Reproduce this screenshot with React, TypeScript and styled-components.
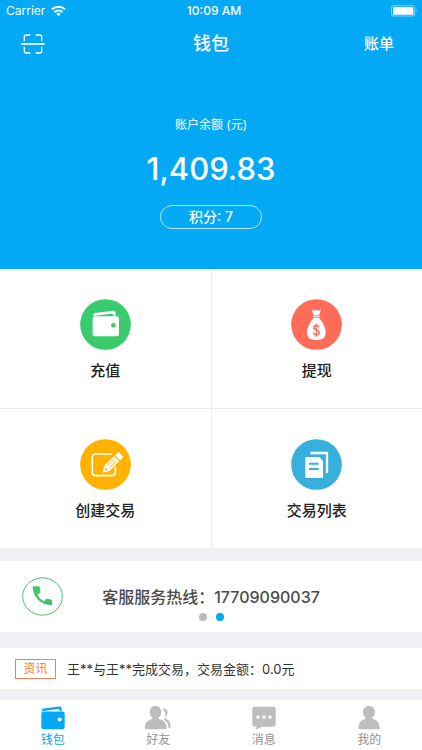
import React from "react";
import styled, { createGlobalStyle } from "styled-components";

const BLUE = "#03a9f4";

const GlobalStyle = createGlobalStyle`
  *, *::before, *::after { box-sizing: border-box; }
  body {
    margin: 0;
    background: #efeff4;
    font-family: Inter, "Noto Sans CJK SC", sans-serif;
    color: #333;
  }
  button { font: inherit; color: inherit; background: none; border: 0; padding: 0; cursor: pointer; }
  a { color: inherit; text-decoration: none; }
  h1, p { margin: 0; font-weight: inherit; }
  svg { display: block; flex: none; }
`;

const Page = styled.div`
  display: flex;
  flex-direction: column;
  min-height: 100vh;
`;

const Hero = styled.header`
  background: ${BLUE};
  color: #fff;
  padding-bottom: 40px;
`;

const StatusBar = styled.div`
  display: grid;
  grid-template-columns: 1fr auto 1fr;
  align-items: center;
  height: 22px;
  padding: 0 4px 0 6px;
  font-size: 12px;
  line-height: 22px;
`;

const Carrier = styled.span`
  display: flex;
  align-items: center;
  gap: 6px;
`;

const Clock = styled.span`
  font-weight: 500;
  padding-left: 4px;
`;

const Battery = styled.span`
  justify-self: end;
`;

const NavBar = styled.nav`
  display: grid;
  grid-template-columns: 1fr auto 1fr;
  align-items: center;
  height: 43px;
  padding: 0 28px 0 21px;
`;

const NavTitle = styled.h1`
  font-size: 18px;
  line-height: 24px;
  font-weight: 500;
  padding-left: 7px;
`;

const BillLink = styled.a`
  justify-self: end;
  font-size: 15px;
  line-height: 24px;
  font-weight: 500;
`;

const Balance = styled.section`
  display: flex;
  flex-direction: column;
  align-items: center;
  padding-top: 50px;
`;

const BalanceLabel = styled.p`
  font-size: 12px;
  line-height: 20px;
`;

const Amount = styled.p`
  margin-top: 12px;
  font-size: 31px;
  line-height: 44px;
  font-weight: 500;
`;

const Points = styled.button`
  margin-top: 14px;
  width: 102px;
  height: 24px;
  && { border: 1px solid rgba(255, 255, 255, 0.7); }
  border-radius: 12px;
  font-size: 14px;
  line-height: 20px;
  font-weight: 500;
`;

const Actions = styled.section`
  display: grid;
  grid-template-columns: 1fr 1fr;
  gap: 1px;
  background: #ebebee;
`;

const ActionTile = styled.button`
  && { background: #fff; padding: 30px 0 25px; }
  display: flex;
  flex-direction: column;
  align-items: center;
  gap: 9px;
  color: #222;
  font-size: 15px;
  line-height: 24px;
  font-weight: 500;
`;

const Hotline = styled.section`
  display: grid;
  grid-template-columns: 84px 1fr 84px;
  align-items: center;
  height: 71px;
  margin-top: 13px;
  background: #fff;
  position: relative;
`;

const CallButton = styled.button`
  justify-self: center;
`;

const HotlineText = styled.p`
  text-align: center;
  white-space: nowrap;
  font-size: 16px;
  line-height: 24px;
  font-weight: 500;
  color: #4a4a4a;
`;

const Dots = styled.div`
  position: absolute;
  left: 0;
  right: 0;
  bottom: 11px;
  display: flex;
  justify-content: center;
  gap: 9px;
`;

const Dot = styled.button<{ $active?: boolean }>`
  width: 8px;
  height: 8px;
  border-radius: 50%;
  && { background: ${(p) => (p.$active ? BLUE : "#bbb")}; }
`;

const News = styled.section`
  display: flex;
  align-items: center;
  gap: 11px;
  height: 41px;
  margin-top: 16px;
  padding: 0 15px;
  background: #fff;
`;

const NewsTag = styled.span`
  width: 41px;
  border: 1px solid #f0805a;
  color: #f58220;
  font-size: 12px;
  line-height: 18px;
  text-align: center;
`;

const NewsText = styled.p`
  font-size: 13px;
  line-height: 20px;
`;

const TabBar = styled.nav`
  display: grid;
  grid-template-columns: repeat(4, 1fr);
  height: 50px;
  margin-top: auto;
  background: #fff;
`;

const Tab = styled.a<{ $active?: boolean }>`
  display: flex;
  flex-direction: column;
  align-items: center;
  padding-top: 6px;
  gap: 2px;
  font-size: 12px;
  line-height: 16px;
  color: ${(p) => (p.$active ? BLUE : "#929292")};
  svg { color: ${(p) => (p.$active ? BLUE : "#bdbdbd")}; }
`;

const WifiIcon = () => (
  <svg width="15" height="12" viewBox="0 0 45 36" fill="none" stroke="#fff" strokeWidth="6">
    <path d="M3 13a28 28 0 0 1 39 0" />
    <path d="M10 21.500a18 18 0 0 1 25 0" />
    <path d="M22.500 34l-7-7.500a10 10 0 0 1 14 0z" fill="#fff" stroke="none" />
  </svg>
);

const BatteryIcon = () => (
  <svg width="27" height="12" viewBox="0 0 81 36">
    <rect x="1.500" y="2" width="70" height="31" rx="6" fill="none" stroke="#fff" strokeOpacity=".5" strokeWidth="3" />
    <rect x="6" y="6" width="61" height="23" rx="2" fill="#fff" />
    <path d="M75 12q5 5.500 0 11z" fill="#fff" fillOpacity=".5" />
  </svg>
);

const ScanIcon = () => (
  <svg width="24" height="20" viewBox="0 0 72 60" fill="none" stroke="#fff" strokeWidth="4">
    <path d="M10 22V9q0-6 6-6h12M44 3h12q6 0 6 6v13M62 38v13q0 6-6 6H44M28 57H16q-6 0-6-6V38" />
    <path d="M1 30h70" strokeWidth="5" />
  </svg>
);

const WalletShape = ({ hole }: { hole: string }) => (
  <>
    <path d="M3 16Q0 8 9 7L60 0Q68-1 69 6V15H62V12Q62 9 57 9L18 14Z" fill="currentColor" />
    <rect y="17" width="79" height="60" rx="8" fill="currentColor" />
    <circle cx="62" cy="44" r="7" fill={hole} />
  </>
);

const RechargeIcon = () => (
  <svg width="51" height="51" viewBox="0 0 153 153" color="#fff">
    <circle cx="76.500" cy="76.500" r="76" fill="#3acb6f" />
    <g transform="translate(38 35)"><WalletShape hole="#3acb6f" /></g>
  </svg>
);

const WithdrawIcon = () => (
  <svg width="51" height="51" viewBox="0 0 153 153">
    <circle cx="76.500" cy="76.500" r="76" fill="#ff6c58" />
    <path d="M62 31l7 4 7-3 7 3 7-4-6 18H68z" fill="#fff" />
    <path d="M67 52h18" stroke="#fff" strokeWidth="3" strokeLinecap="round" />
    <path d="M68 56h16c11 13 20 29 20 44 0 17-9 23-28 23s-28-6-28-23c0-15 9-31 20-44z" fill="#fff" />
    <path d="M84 85q-1-6-8-6-8 0-8 6.500 0 5.500 8 7 9 1.500 9 8 0 7-9 7-8 0-9-7M76 74v39" fill="none" stroke="#ff6c58" strokeWidth="4" />
  </svg>
);

const CreateIcon = () => (
  <svg width="51" height="51" viewBox="0 0 153 153">
    <circle cx="76.500" cy="76.500" r="76" fill="#ffb300" />
    <path d="M95 45H47q-10 0-10 10v45q0 10 10 10h49q10 0 10-10V83" fill="none" stroke="#fff" strokeWidth="5" />
    <g transform="translate(68 101) rotate(-45)">
      <path d="M0 0l18-11h41v22H18z" fill="#fff" />
      <path d="M63-11h11q4 0 4 4V7q0 4-4 4H63z" fill="#fff" />
      <path d="M26-4h27M26 4h27" stroke="#ffb300" strokeWidth="2.500" />
      <path d="M9 0l8-5v10z" fill="#ffb300" />
    </g>
  </svg>
);

const ListIcon = () => (
  <svg width="51" height="51" viewBox="0 0 153 153">
    <circle cx="76.500" cy="76.500" r="76" fill="#38b0de" />
    <path d="M58 42h50v60" fill="none" stroke="#fff" strokeWidth="7" />
    <path d="M43 54h42l11 12v51H43z" fill="#fff" />
    <path d="M54 74h29M54 90h29" stroke="#38b0de" strokeWidth="6" />
  </svg>
);

const CallIcon = () => (
  <svg width="41" height="39" viewBox="0 0 123 117">
    <ellipse cx="61.500" cy="58.500" rx="59.500" ry="56" fill="none" stroke="#46c46c" strokeWidth="3" />
    <path
      d="M35 28h15q3 0 3.500 3l2 13q0 2-2 4l-7 7q8 12 19 18l7-7q2-2 4-1l11 3q3 1 3 4v10q0 3-3 3C57 85 33 60 32 31q0-3 3-3z"
      fill="#46c46c"
    />
  </svg>
);

const WalletTabIcon = () => (
  <svg width="24" height="24" viewBox="-1 -1 81 80"><WalletShape hole="#fff" /></svg>
);

const FriendsIcon = () => (
  <svg width="28" height="24" viewBox="0 0 84 72" fill="currentColor">
    <path d="M54 8q15-3 17 10 0 9-6 15v5c10 3 14 9 15 24q0 4-4 4h-2c-1-12-5-20-14-25 7-10 6-25-6-33z" />
    <path d="M34 0c11 0 18 8 18 18 0 7-3 13-8 17v4c15 3 23 11 24 27q0 4-4 4H6q-4 0-4-4c1-16 9-24 23-27v-4c-5-4-8-10-8-17C17 8 24 0 34 0z" />
  </svg>
);

const MessageIcon = () => (
  <svg width="24" height="24" viewBox="0 0 72 72">
    <path d="M7 2h58q6 0 6 6v48q0 6-6 6H31L10 71q4-4 4-9H7q-6 0-6-6V8q0-6 6-6z" fill="currentColor" />
    <g fill="#fff"><circle cx="18" cy="33" r="5" /><circle cx="36" cy="33" r="5" /><circle cx="54" cy="33" r="5" /></g>
  </svg>
);

const ProfileIcon = () => (
  <svg width="24" height="24" viewBox="0 0 72 72" fill="currentColor">
    <path d="M36 0c11 0 18 8 18 18 0 7-3 13-8 17v3c14 3 21 12 22 28q0 4-4 4H8q-4 0-4-4c1-16 8-25 22-28v-3c-5-4-8-10-8-17C18 8 25 0 36 0z" />
  </svg>
);

const actions = [
  { label: "充值", Icon: RechargeIcon },
  { label: "提现", Icon: WithdrawIcon },
  { label: "创建交易", Icon: CreateIcon },
  { label: "交易列表", Icon: ListIcon },
];

const tabs = [
  { label: "钱包", Icon: WalletTabIcon, active: true },
  { label: "好友", Icon: FriendsIcon },
  { label: "消息", Icon: MessageIcon },
  { label: "我的", Icon: ProfileIcon },
];

export default function App() {
  return (
    <Page>
      <GlobalStyle />
      <Hero>
        <StatusBar>
          <Carrier>Carrier <WifiIcon /></Carrier>
          <Clock>10:09 AM</Clock>
          <Battery><BatteryIcon /></Battery>
        </StatusBar>
        <NavBar>
          <button aria-label="扫一扫"><ScanIcon /></button>
          <NavTitle>钱包</NavTitle>
          <BillLink href="#bills">账单</BillLink>
        </NavBar>
        <Balance>
          <BalanceLabel>账户余额 (元)</BalanceLabel>
          <Amount>1,409.83</Amount>
          <Points>积分: 7</Points>
        </Balance>
      </Hero>
      <Actions>
        {actions.map(({ label, Icon }) => (
          <ActionTile key={label}><Icon />{label}</ActionTile>
        ))}
      </Actions>
      <Hotline>
        <CallButton aria-label="拨打客服热线"><CallIcon /></CallButton>
        <HotlineText>客服服务热线：17709090037</HotlineText>
        <Dots>
          <Dot aria-label="第 1 页" />
          <Dot aria-label="第 2 页" $active />
        </Dots>
      </Hotline>
      <News>
        <NewsTag>资讯</NewsTag>
        <NewsText>王**与王**完成交易，交易金额：0.0元</NewsText>
      </News>
      <TabBar>
        {tabs.map(({ label, Icon, active }) => (
          <Tab key={label} href="#" $active={active}><Icon />{label}</Tab>
        ))}
      </TabBar>
    </Page>
  );
}
